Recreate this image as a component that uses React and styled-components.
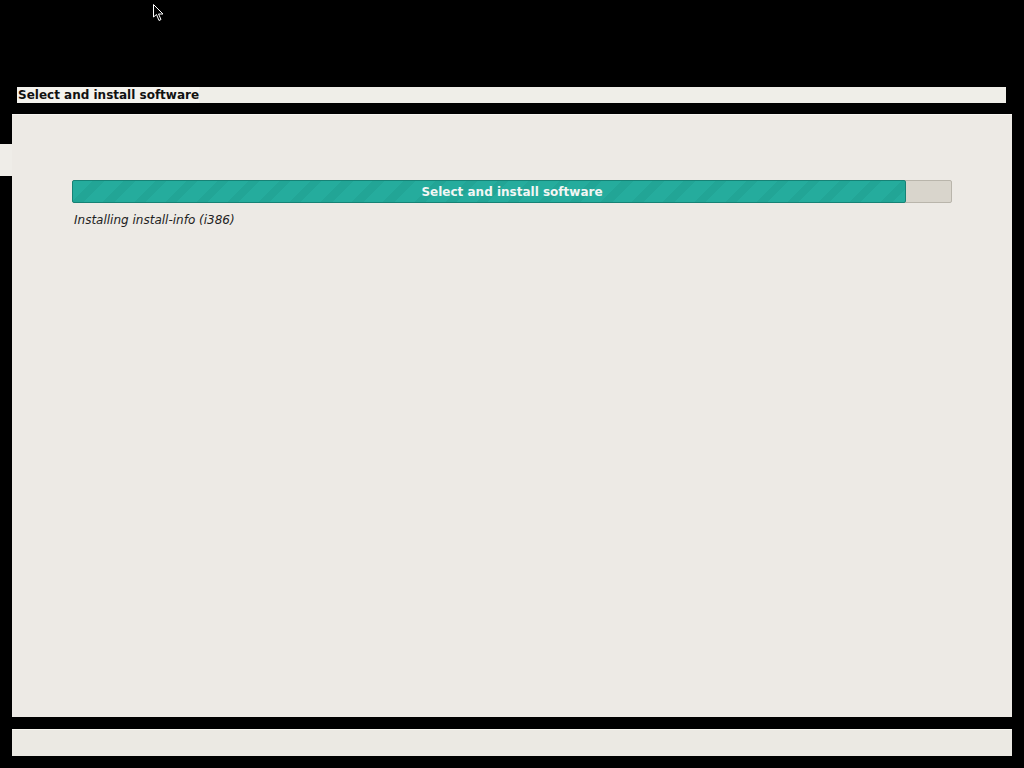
import React from 'react'
import styled, { createGlobalStyle } from 'styled-components'

const Global = createGlobalStyle`
  html, body {
    margin: 0;
    padding: 0;
    background: #000;
    overflow: hidden;
  }
  body {
    font-family: "DejaVu Sans", Verdana, sans-serif;
  }
`

const Screen = styled.div`
  position: relative;
  width: 1024px;
  height: 768px;
  background: #000;
  display: flex;
  flex-direction: column;
`

const Cursor = styled.svg`
  position: absolute;
  left: 153px;
  top: 4px;
`

const TitleBar = styled.div`
  margin: 87px 18px 0 17px;
  height: 16px;
  background: #efeee8;
  display: flex;
  align-items: center;
`

const TitleText = styled.span`
  font-size: 12px;
  font-weight: bold;
  color: #111;
  padding-left: 1px;
  background: #f4f3ee;
  line-height: 16px;
`

const Middle = styled.div`
  margin-top: 11px;
  display: flex;
  height: 603px;
`

const SideTab = styled.div`
  width: 12px;
  height: 32px;
  margin-top: 30px;
  background: #efede8;
`

const Panel = styled.div`
  width: 1000px;
  background: #edeae5;
  border-top: 1px solid #f6f4f0;
  box-sizing: border-box;
  padding: 65px 60px 0 60px;
`

const Track = styled.div`
  position: relative;
  height: 23px;
  border: 1px solid #b9b5ab;
  border-radius: 2px;
  background: #d9d5cc;
  box-sizing: border-box;
  width: 880px;
`

const Fill = styled.div`
  position: absolute;
  left: -1px;
  top: -1px;
  bottom: -1px;
  border: 1px solid #168275;
  border-radius: 2px;
  box-sizing: border-box;
  background: repeating-linear-gradient(
    135deg,
    #25ac9d 0px,
    #25ac9d 14px,
    #22a596 14px,
    #22a596 22px
  );
`

const BarLabel = styled.div`
  position: absolute;
  inset: 0;
  display: flex;
  align-items: center;
  justify-content: center;
  font-size: 12px;
  font-weight: bold;
  color: #f2f6f4;
`

const Status = styled.div`
  margin-top: 10px;
  margin-left: 2px;
  font-size: 12px;
  font-style: italic;
  color: #222;
`

const BottomBar = styled.div`
  margin: 12px 0 0 12px;
  width: 1000px;
  height: 27px;
  background: #ebe9e3;
  border-top: 1px solid #f7f6f0;
  box-sizing: border-box;
`

export default function App() {
  const progress = 836 / 880
  return (
    <>
      <Global />
      <Screen>
        <Cursor width="12" height="18" viewBox="0 0 12 18">
          <path d="M0.5 0.5 L0.5 13 L3.5 10.5 L6 16.5 L8 15.5 L5.5 10 L10 10 Z" fill="#000" stroke="#fff" strokeWidth="1" />
        </Cursor>
        <TitleBar>
          <TitleText>Select and install software</TitleText>
        </TitleBar>
        <Middle>
          <SideTab />
          <Panel>
            <Track>
              <Fill style={{ width: `${progress * 100}%` }} />
              <BarLabel>Select and install software</BarLabel>
            </Track>
            <Status>Installing install-info (i386)</Status>
          </Panel>
        </Middle>
        <BottomBar />
      </Screen>
    </>
  )
}
